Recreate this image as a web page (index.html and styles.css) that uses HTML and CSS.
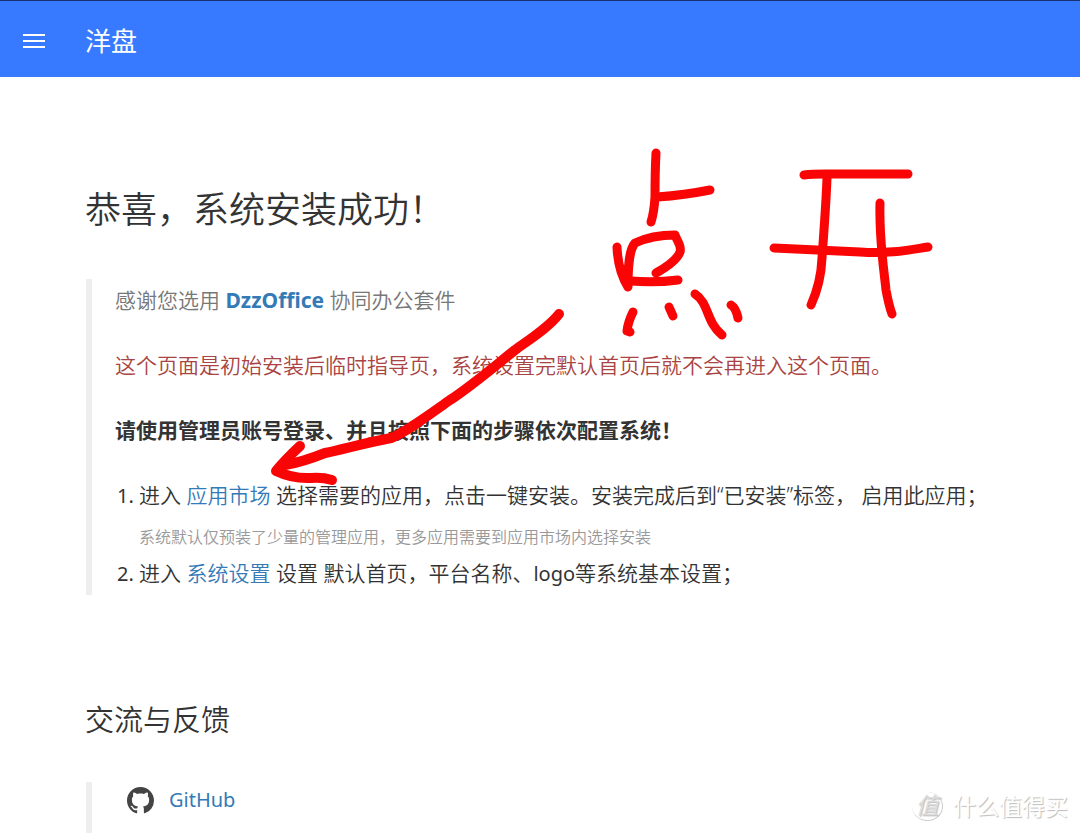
FILE: index.html
```html
<!DOCTYPE html>
<html lang="zh-CN">
<head>
    <meta charset="UTF-8">
    <meta name="viewport" content="width=device-width, initial-scale=1.0">
    <title>洋盘</title>
    <link rel="stylesheet" href="styles.css">
</head>
<body>
    <header class="topbar">
        <button class="menu-btn" type="button" aria-label="菜单">
            <svg width="22" height="14" viewBox="0 0 22 14" fill="#fff">
                <rect width="22" height="2" y="0"/>
                <rect width="22" height="2" y="6"/>
                <rect width="22" height="2" y="12"/>
            </svg>
        </button>
        <span class="site-name">洋盘</span>
    </header>

    <main class="content">
        <h1 class="title">恭喜，系统安装成功！</h1>
        <blockquote class="quote">
            <p class="thanks">感谢您选用 <a class="brand" href="#">DzzOffice</a> 协同办公套件</p>
            <p class="danger">这个页面是初始安装后临时指导页，系统设置完默认首页后就不会再进入这个页面。</p>
            <p class="strong">请使用管理员账号登录、并且按照下面的步骤依次配置系统！</p>
            <ol class="steps">
                <li>进入 <a href="#">应用市场</a> 选择需要的应用，点击一键安装。安装完成后到“已安装”标签， 启用此应用；
                    <p class="note">系统默认仅预装了少量的管理应用，更多应用需要到应用市场内选择安装</p>
                </li>
                <li>进入 <a href="#">系统设置</a> 设置 默认首页，平台名称、<span class="latin">logo</span>等系统基本设置；</li>
            </ol>
        </blockquote>

        <h2 class="subtitle">交流与反馈</h2>
        <blockquote class="quote feedback">
            <a class="github" href="#">
                <svg width="27" height="27" viewBox="0 0 16 16" fill="#444">
                    <path d="M8 0C3.58 0 0 3.58 0 8c0 3.54 2.29 6.53 5.47 7.59.4.07.55-.17.55-.38 0-.19-.01-.82-.01-1.49-2.01.37-2.53-.49-2.69-.94-.09-.23-.48-.94-.82-1.13-.28-.15-.68-.52-.01-.53.63-.01 1.08.58 1.23.82.72 1.21 1.87.87 2.33.66.07-.52.28-.87.51-1.07-1.78-.2-3.64-.89-3.64-3.95 0-.87.31-1.59.82-2.15-.08-.2-.36-1.02.08-2.12 0 0 .67-.21 2.2.82.64-.18 1.32-.27 2-.27s1.36.09 2 .27c1.53-1.04 2.2-.82 2.2-.82.44 1.1.16 1.92.08 2.12.51.56.82 1.27.82 2.15 0 3.07-1.87 3.75-3.65 3.95.29.25.54.73.54 1.48 0 1.07-.01 1.93-.01 2.2 0 .21.15.46.55.38A8.01 8.01 0 0 0 16 8c0-4.42-3.58-8-8-8z"/>
                </svg>
                <span class="latin">GitHub</span>
            </a>
        </blockquote>
    </main>

    <!-- red pen marks on top of the page -->
    <svg class="marks" width="960" height="500" viewBox="0 0 960 500" aria-hidden="true">
        <g fill="none" stroke="#fa0505" stroke-width="9" stroke-linecap="round" stroke-linejoin="round">
            <path d="M656 153C655 172 655 183 655 197Q654 213 651 222"/>
            <path d="M657 197Q685 195 710 190"/>
            <path d="M617 247Q618 271 628 287C628 266 629 250 635 243Q652 235 675 235C677 241 682 246 680 252C677 260 665 268 656 273"/>
            <path d="M631 281Q655 283 678 280"/>
            <path d="M633 312Q628 322 627 331L630 332"/>
            <path d="M669 307L673 316"/>
            <path d="M695 294C709 303 706 322 722 335"/>
            <path d="M731 305Q736 308 738 318"/>
            <path d="M804 175Q812 174 825 174H908"/>
            <path d="M827 178C826 205 824 230 822 258Q821 283 811 305"/>
            <path d="M880 203C879 240 884 270 886 290Q889 306 892 314"/>
            <path d="M774 248L860 252C890 254 908 250 928 247"/>
            <path stroke-width="10" d="M559 314C548 328 530 339 515 350C490 370 470 387 450 400C426 417 406 432 391 438C365 443 344 449 325 453C310 459 297 463 285 465"/>
            <path stroke-width="10" d="M300 446Q286 459 276 471Q293 479 311 478Q322 477 332 480"/>
        </g>
    </svg>

    <div class="watermark"><span class="seal">值</span><span>什么值得买</span></div>
</body>
</html>
```

FILE: styles.css
```css
* {
    box-sizing: border-box;
}

body {
    margin: 0;
    min-height: 100vh;
    display: flex;
    flex-direction: column;
    position: relative;
    background: #fff;
    color: #333;
    font-family: "Noto Sans", "Noto Sans CJK SC", sans-serif;
    font-size: 21px;
    font-weight: 350;
    line-height: 36px;
}

a {
    color: #337ab7;
    text-decoration: none;
}

/* top bar */
.topbar {
    display: flex;
    align-items: center;
    gap: 39px;
    height: 77px;
    padding: 4px 22px 0;
    background: #3779ff;
    border-top: 1px solid #14306e;
    color: #fff;
}

.menu-btn {
    display: flex;
    padding: 0 1px;
    border: 0;
    background: none;
}

.site-name {
    font-size: 26px;
    font-weight: 400;
}

/* content */
.content {
    flex: 1;
    display: flex;
    flex-direction: column;
    padding: 108px 85px 0;
}

.title,
.subtitle {
    margin: 0;
    font-weight: 350;
}

.title {
    font-size: 36px;
    line-height: 50px;
}

.subtitle {
    margin-top: 100px;
    font-size: 29px;
    line-height: 50px;
}

.quote {
    margin: 44px 0 0 1px;
    padding: 3px 0 3px 23px;
    border-left: 6px solid #eee;
}

.quote p {
    margin: 0 0 29px;
}

.thanks {
    color: #777;
}

.brand {
    font-weight: 700;
}

.danger {
    color: #a94442;
}

.strong {
    font-weight: 700;
}

.latin,
.steps li::marker {
    font-family: "Noto Sans", sans-serif;
    font-size: 20px;
    font-weight: 400;
}

.steps {
    margin: 0;
    padding-left: 24px;
}

.quote .note {
    margin: 6px 0 0;
    color: #999;
    font-size: 16px;
}

.feedback {
    flex: 1;
    margin-top: 37px;
    padding: 0 0 0 35px;
}

.github {
    display: inline-flex;
    align-items: center;
    gap: 15px;
}

/* pen marks and watermark */
.marks {
    position: absolute;
    top: 0;
    left: 0;
    pointer-events: none;
}

.watermark {
    position: absolute;
    right: 12px;
    bottom: 9px;
    display: flex;
    align-items: center;
    gap: 10px;
    color: #fff;
    font-size: 23px;
    font-weight: 400;
    text-shadow: 1px 1px 1px #bbb;
}

.seal {
    width: 31px;
    height: 29px;
    border-radius: 50%;
    border-right: 1px solid #ccc;
    border-bottom: 1px solid #ccc;
    color: #ddd;
    font-style: italic;
    line-height: 27px;
    text-align: center;
}
```
